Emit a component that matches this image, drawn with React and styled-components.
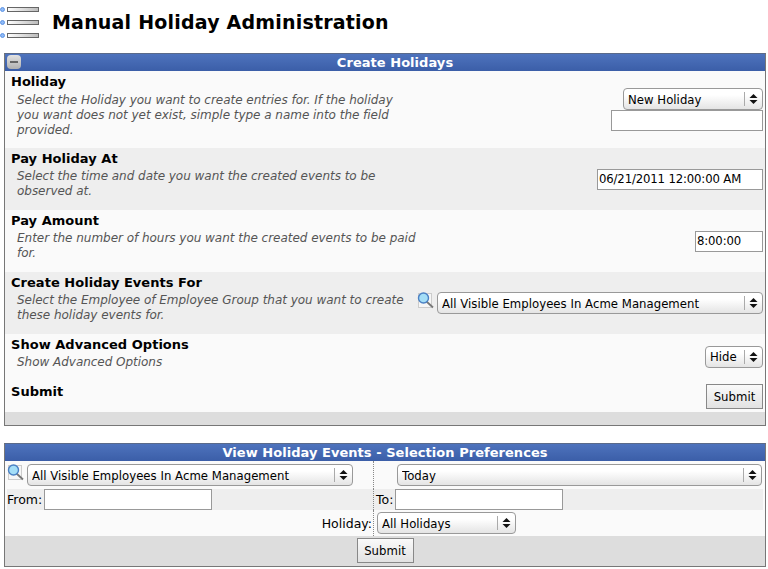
import React from 'react';
import styled, { createGlobalStyle } from 'styled-components';

const Global = createGlobalStyle`
  html, body { margin: 0; padding: 0; background: #fff; }
  body { font-family: "DejaVu Sans", sans-serif; color: #000; }
`;
const Page = styled.div`
  width: 768px; height: 569px; overflow: hidden; box-sizing: border-box; padding: 0 2px 0 4px;
`;
const TitleBar = styled.div`
  display: flex; align-items: center; height: 53px; margin-left: -4px; box-sizing: border-box; padding-bottom: 10px;
`;
const TitleText = styled.h1`
  margin: 0 0 0 12px; font-size: 19px; line-height: 24px; font-weight: bold; letter-spacing: 0.2px;
`;
const Panel = styled.section`
  border: 1px solid #777; border-top-color: #5a6a8a; background: #fafafa; margin-bottom: 17px;
`;
const PanelHeader = styled.header`
  position: relative; box-sizing: border-box; height: 17px; line-height: 17px; text-align: center; color: #fff;
  font-size: 13px; font-weight: bold; letter-spacing: 0.04px; padding-left: ${p => p.$pl ?? 0}px;
  background: linear-gradient(#4e73bd, #3b5ea8);
`;
const Collapse = styled.span`
  position: absolute; left: 2px; top: 1px; width: 14px; height: 14px; border-radius: 4px;
  background: linear-gradient(#e2e2e2, #b0b0b0); display: flex; align-items: center; justify-content: center;
  &::after { content: ""; width: 8px; height: 2px; background: #666; }
`;
const Row = styled.div`
  display: flex; justify-content: space-between; align-items: center; box-sizing: border-box;
  height: ${p => p.$h}px; background: ${p => (p.$alt ? '#eee' : '#fafafa')}; padding: 0 2px 0 6px;
`;
const Info = styled.div`
  width: 407px; align-self: flex-start; padding-top: ${p => p.$pt ?? 3}px;
`;
const Label = styled.div`
  font-size: 13px; line-height: 16px; font-weight: bold; letter-spacing: 0.03px;
`;
const Desc = styled.div`
  font-size: 12px; line-height: 15px; font-style: italic; color: #555; padding-left: 6px;
  margin-top: ${p => p.$mt ?? 2}px; letter-spacing: -0.03px;
`;
const Controls = styled.div`
  display: flex; flex-direction: column; align-items: flex-end; padding-top: ${p => p.$pt ?? 0}px;
`;
const Inline = styled.div`
  display: flex; align-items: center; gap: 3px;
`;
const SelectBox = styled.div`
  display: flex; align-items: center; box-sizing: border-box; width: ${p => p.$w}px; height: 22px;
  border: 1px solid #999; border-radius: 4px; background: linear-gradient(#fff 30%, #e4e4e4);
  font-size: 11.7px; letter-spacing: 0.03px; padding-left: 4px;
`;
const SelectText = styled.span`
  flex: 1; white-space: nowrap; overflow: hidden; padding-top: 1px;
`;
const SelectArrow = styled.span`
  display: flex; align-items: center; justify-content: center; width: 17px; height: 14px; border-left: 1px solid #aaa;
`;
const TextField = styled.input`
  box-sizing: border-box; width: ${p => p.$w}px; height: 21px; border: 1px solid #999; background: #fff;
  font: 11.7px "DejaVu Sans", sans-serif; letter-spacing: -0.15px; color: #000; padding: 0 1px; margin: 0; outline: none; border-radius: 0;
`;
const Button = styled.button`
  box-sizing: border-box; width: 57px; height: 25px; border: 1px solid #888; padding: 1px 0 0; border-radius: 0;
  background: linear-gradient(#fafafa, #e2e2e2); font: 11.7px "DejaVu Sans", sans-serif; letter-spacing: 0.03px; color: #000;
`;
const Footer = styled.div`
  height: ${p => p.$h}px; background: #ddd; display: flex; justify-content: center; align-items: flex-end; padding-bottom: ${p => p.$pb ?? 0}px;
`;
const Grid = styled.div`
  display: grid; grid-template-columns: 366px 1fr; padding: 0 2px;
`;
const Cell = styled.div`
  display: flex; align-items: center; height: ${p => p.$h}px; background: ${p => (p.$alt ? '#eee' : '#fafafa')};
  justify-content: ${p => (p.$end ? 'flex-end' : 'flex-start')};
  font-size: 12.5px; box-sizing: border-box;
  padding-left: ${p => p.$pl ?? 0}px; padding-right: ${p => p.$pr ?? 0}px;
  ${p => p.$divider && 'border-left: 1px dotted #888;'}
`;
const FieldLabel = styled.span`
  width: ${p => p.$w}px;
`;

const Arrows = () => (
  <SelectArrow>
    <svg width="9" height="12" viewBox="0 0 9 12"><path d="M4.5 1 8.5 5H.5zM4.5 11 .5 7h8z" fill="#111" /></svg>
  </SelectArrow>
);
const Select = ({ w, children }) => (
  <SelectBox $w={w}><SelectText>{children}</SelectText><Arrows /></SelectBox>
);
const Magnifier = () => (
  <svg width="17" height="17" viewBox="0 0 17 17" style={{ alignSelf: 'flex-start' }}>
    <rect x="1.5" y="1.5" width="13" height="14" fill="#f6f6f6" stroke="#ccc" />
    <path d="M9.5 9.5 16 15.5" stroke="#777" strokeWidth="1.8" />
    <circle cx="6.5" cy="6" r="5" fill="#a4def7" stroke="#4a80c4" strokeWidth="1.4" />
  </svg>
);
const ListIcon = () => (
  <svg width="40" height="40" viewBox="0 0 40 40">
    <defs>
      <linearGradient id="bar"><stop offset="0" stopColor="#fff" /><stop offset="1" stopColor="#bbb" /></linearGradient>
    </defs>
    {[7.5, 20.5, 33.5].map(y => (
      <g key={y}>
        <circle cx="2.5" cy={y} r="2" fill="#8fbaf7" stroke="#4a86e0" strokeWidth="0.8" />
        <rect x="7.5" y={y - 2} width="31" height="4" fill="url(#bar)" stroke="#666" />
      </g>
    ))}
  </svg>
);

export default function App() {
  return (
    <Page>
      <Global />
      <TitleBar>
        <ListIcon />
        <TitleText>Manual Holiday Administration</TitleText>
      </TitleBar>
      <Panel>
        <PanelHeader $pl={20}><Collapse />Create Holidays</PanelHeader>
        <Row $h={77}>
          <Info>
            <Label>Holiday</Label>
            <Desc $mt={3}>Select the Holiday you want to create entries for. If the holiday you want does not yet exist, simple type a name into the field provided.</Desc>
          </Info>
          <Controls>
            <Select w={140}>New Holiday</Select>
            <TextField $w={152} />
          </Controls>
        </Row>
        <Row $h={62} $alt>
          <Info>
            <Label>Pay Holiday At</Label>
            <Desc>Select the time and date you want the created events to be observed at.</Desc>
          </Info>
          <Controls><TextField $w={166} defaultValue="06/21/2011 12:00:00 AM" /></Controls>
        </Row>
        <Row $h={62}>
          <Info>
            <Label>Pay Amount</Label>
            <Desc>Enter the number of hours you want the created events to be paid for.</Desc>
          </Info>
          <Controls><TextField $w={68} defaultValue="8:00:00" /></Controls>
        </Row>
        <Row $h={62} $alt>
          <Info>
            <Label>Create Holiday Events For</Label>
            <Desc>Select the Employee of Employee Group that you want to create these holiday events for.</Desc>
          </Info>
          <Controls>
            <Inline>
              <Magnifier />
              <Select w={326}>All Visible Employees In Acme Management</Select>
            </Inline>
          </Controls>
        </Row>
        <Row $h={44}>
          <Info>
            <Label>Show Advanced Options</Label>
            <Desc>Show Advanced Options</Desc>
          </Info>
          <Controls $pt={1}><Select w={58}>Hide</Select></Controls>
        </Row>
        <Row $h={34}>
          <Info $pt={6}>
            <Label>Submit</Label>
          </Info>
          <Controls $pt={3}><Button>Submit</Button></Controls>
        </Row>
        <Footer $h={13} />
      </Panel>
      <Panel>
        <PanelHeader>View Holiday Events - Selection Preferences</PanelHeader>
        <Grid>
          <Cell $h={28}>
            <Inline>
              <Magnifier />
              <Select w={326}>All Visible Employees In Acme Management</Select>
            </Inline>
          </Cell>
          <Cell $h={28} $divider $pl={23}><Select w={365}>Today</Select></Cell>
          <Cell $h={21} $alt><FieldLabel $w={37}>From:</FieldLabel><TextField $w={168} /></Cell>
          <Cell $h={21} $alt $divider $pl={2}><FieldLabel $w={19}>To:</FieldLabel><TextField $w={168} /></Cell>
          <Cell $h={26} $end $pr={1}>Holiday:</Cell>
          <Cell $h={26} $divider $pl={3}><Select w={139}>All Holidays</Select></Cell>
        </Grid>
        <Footer $h={27} $pb={3}><Button>Submit</Button></Footer>
      </Panel>
    </Page>
  );
}
